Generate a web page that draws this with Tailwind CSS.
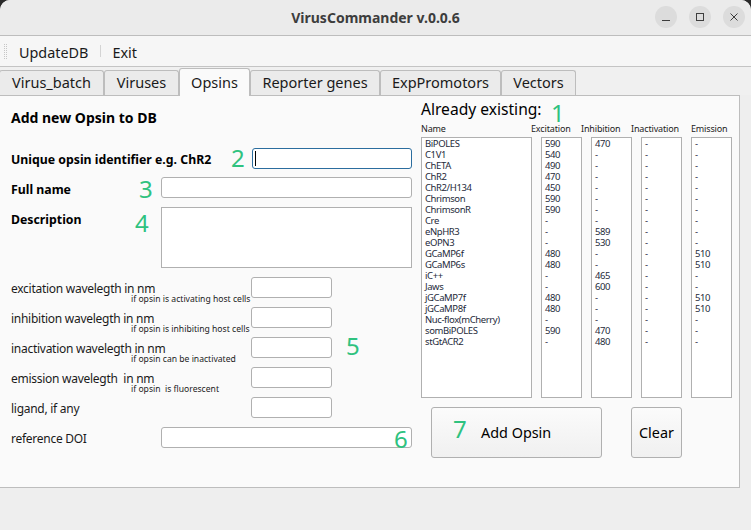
<!DOCTYPE html>
<html lang="en">
  <head>
    <meta charset="UTF-8" />
    <title>VirusCommander v.0.0.6</title>
    <script src="https://cdn.jsdelivr.net/npm/@tailwindcss/browser@4"></script>
  </head>
  <body class="bg-[#2a2a2a]">
    <div class="w-[751px] h-[530px] relative overflow-hidden rounded-t-[10px] bg-[#eeeeee] font-['Noto_Sans',sans-serif] text-[#1a1a1a]">
      <!-- title bar -->
      <div class="h-[36px] bg-[#ebebeb] border-b border-[#bdbdbd] relative flex items-center justify-center">
        <span class="text-[14px] font-bold text-[#3d3d3d]">VirusCommander v.0.0.6</span>
        <div class="absolute right-[6px] top-[6px] flex gap-[12px]">
          <div class="w-[22px] h-[22px] rounded-full bg-[#dcdcdc] flex items-center justify-center">
            <svg width="10" height="10" viewBox="0 0 10 10"><path d="M1 8.5H9" stroke="#3d3d3d" stroke-width="1"/></svg>
          </div>
          <div class="w-[22px] h-[22px] rounded-full bg-[#dcdcdc] flex items-center justify-center">
            <svg width="10" height="10" viewBox="0 0 10 10"><rect x="1.5" y="1.5" width="7" height="7" fill="none" stroke="#3d3d3d"/></svg>
          </div>
          <div class="w-[22px] h-[22px] rounded-full bg-[#dcdcdc] flex items-center justify-center">
            <svg width="10" height="10" viewBox="0 0 10 10"><path d="M1.5 1.5L8.5 8.5M8.5 1.5L1.5 8.5" stroke="#3d3d3d" stroke-width="1"/></svg>
          </div>
        </div>
      </div>

      <!-- toolbar -->
      <div class="h-[31px] bg-[#f6f6f6] border-b border-[#c4c4c4] flex items-center text-[14.4px]">
        <svg class="ml-[4px]" width="4" height="15" viewBox="0 0 4 15" fill="#c6c6c6">
          <path d="M0 0h1v1H0zM2 0h1v1H2zM0 2h1v1H0zM2 2h1v1H2zM0 4h1v1H0zM2 4h1v1H2zM0 6h1v1H0zM2 6h1v1H2zM0 8h1v1H0zM2 8h1v1H2zM0 10h1v1H0zM2 10h1v1H2zM0 12h1v1H0zM2 12h1v1H2zM0 14h1v1H0zM2 14h1v1H2z"/>
        </svg>
        <span class="ml-[11px] mt-[3px]">UpdateDB</span>
        <div class="ml-[12px] w-px h-[12px] bg-[#d4d4d4]"></div>
        <span class="ml-[11px] mt-[3px]">Exit</span>
      </div>

      <!-- tabs -->
      <div class="h-[28px] flex items-end bg-[#f0f0f0] text-[14.5px] relative z-10">
        <div class="w-[105px] h-[25px] -ml-px bg-[#ebebeb] border border-b-0 border-[#bdbdbd] rounded-t-[3px] flex items-center justify-center">Virus_batch</div>
        <div class="w-[75px] h-[25px] bg-[#ebebeb] border border-b-0 border-[#bdbdbd] rounded-t-[3px] flex items-center justify-center">Viruses</div>
        <div class="w-[71px] h-[28px] -mb-px bg-[#fafafa] border border-b-0 border-[#bdbdbd] rounded-t-[3px] flex items-center justify-center">Opsins</div>
        <div class="w-[130px] h-[25px] bg-[#ebebeb] border border-b-0 border-[#bdbdbd] rounded-t-[3px] flex items-center justify-center">Reporter genes</div>
        <div class="w-[121px] h-[25px] bg-[#ebebeb] border border-b-0 border-[#bdbdbd] rounded-t-[3px] flex items-center justify-center">ExpPromotors</div>
        <div class="w-[75px] h-[25px] bg-[#ebebeb] border border-b-0 border-[#bdbdbd] rounded-t-[3px] flex items-center justify-center">Vectors</div>
      </div>

      <!-- pane -->
      <div class="w-[740px] h-[393px] bg-[#fafafa] border-t border-r border-b border-[#bdbdbd] flex">
        <!-- left form -->
        <div class="w-[421px] pl-[11px] text-[12px] tracking-[-0.27px]">
          <h2 class="h-[52px] pt-[12px] text-[14px] tracking-normal leading-[20px] font-bold text-black">Add new Opsin to DB</h2>
          <div class="h-[29px] flex items-start justify-between pr-[9px]">
            <span class="font-bold text-[12.3px] tracking-normal leading-[24px] text-black">Unique opsin identifier e.g. ChR2</span>
            <div class="w-[160px] h-[21px] bg-white border border-[#2b6d9e] rounded-[3px] flex items-center pl-[2px]"><div class="w-px h-[15px] bg-black"></div></div>
          </div>
          <div class="h-[30px] flex items-start justify-between pr-[9px]">
            <span class="font-bold text-[12.3px] tracking-normal leading-[26px] text-black">Full name</span>
            <div class="w-[251px] h-[21px] bg-white border border-[#b0b0b0] rounded-[3px]"></div>
          </div>
          <div class="h-[70px] flex items-start justify-between pr-[9px]">
            <span class="font-bold text-[12.3px] tracking-normal leading-[26px] text-black">Description</span>
            <div class="w-[251px] h-[61px] bg-white border border-[#b0b0b0]"></div>
          </div>
          <div class="h-[30px] flex items-start relative">
            <span class="leading-[24px]">excitation wavelegth in nm</span>
            <span class="absolute left-[120px] top-[16px] text-[8.6px] tracking-normal leading-[12px] whitespace-nowrap">if opsin is activating host cells</span>
            <div class="absolute left-[240px] top-0 w-[81px] h-[21px] bg-white border border-[#b0b0b0] rounded-[3px]"></div>
          </div>
          <div class="h-[30px] flex items-start relative">
            <span class="leading-[24px]">inhibition wavelegth in nm</span>
            <span class="absolute left-[120px] top-[16px] text-[8.6px] tracking-normal leading-[12px] whitespace-nowrap">if opsin is inhibiting host cells</span>
            <div class="absolute left-[240px] top-0 w-[81px] h-[21px] bg-white border border-[#b0b0b0] rounded-[3px]"></div>
          </div>
          <div class="h-[30px] flex items-start relative">
            <span class="leading-[24px]">inactivation wavelegth in nm</span>
            <span class="absolute left-[120px] top-[16px] text-[8.6px] tracking-normal leading-[12px] whitespace-nowrap">if opsin can be inactivated</span>
            <div class="absolute left-[240px] top-0 w-[81px] h-[21px] bg-white border border-[#b0b0b0] rounded-[3px]"></div>
          </div>
          <div class="h-[30px] flex items-start relative">
            <span class="leading-[24px] whitespace-pre">emission wavelegth  in nm</span>
            <span class="absolute left-[120px] top-[16px] text-[8.6px] tracking-normal leading-[12px] whitespace-pre">if opsin  is fluorescent</span>
            <div class="absolute left-[240px] top-0 w-[81px] h-[21px] bg-white border border-[#b0b0b0] rounded-[3px]"></div>
          </div>
          <div class="h-[30px] flex items-start relative">
            <span class="leading-[24px]">ligand, if any</span>
            <div class="absolute left-[240px] top-0 w-[81px] h-[21px] bg-white border border-[#b0b0b0] rounded-[3px]"></div>
          </div>
          <div class="h-[21px] flex items-start justify-between pr-[9px]">
            <span class="leading-[24px]">reference DOI</span>
            <div class="w-[251px] h-[21px] bg-white border border-[#b0b0b0] rounded-[3px]"></div>
          </div>
        </div>

        <!-- right lists -->
        <div class="flex-1 text-[9.5px] tracking-[-0.4px]">
          <div class="h-[24px] pt-[1px] text-[15.6px] tracking-normal leading-[24px] text-black">Already existing:</div>
          <div class="h-[17px] flex items-center leading-[12px] text-[9px] tracking-[-0.15px] text-[#222]">
            <span class="w-[110px]">Name</span>
            <span class="w-[50px]">Excitation</span>
            <span class="w-[50px]">Inhibition</span>
            <span class="w-[60px]">Inactivation</span>
            <span>Emission</span>
          </div>
          <div class="flex gap-[9px] leading-[11px] text-[#1e2a3a]">
            <div class="w-[111px] h-[261px] bg-white border border-[#b0b0b0] pl-[3px] whitespace-pre-line">BiPOLES
C1V1
ChETA
ChR2
ChR2/H134
Chrimson
ChrimsonR
Cre
eNpHR3
eOPN3
GCaMP6f
GCaMP6s
iC++
Jaws
jGCaMP7f
jGCaMP8f
Nuc-flox(mCherry)
somBiPOLES
stGtACR2</div>
            <div class="w-[41px] h-[261px] bg-white border border-[#b0b0b0] pl-[3px] whitespace-pre-line">590
540
490
470
450
590
590
-
-
-
480
480
-
-
480
480
-
590
-</div>
            <div class="w-[41px] h-[261px] bg-white border border-[#b0b0b0] pl-[3px] whitespace-pre-line">470
-
-
-
-
-
-
-
589
530
-
-
465
600
-
-
-
470
480</div>
            <div class="w-[41px] h-[261px] bg-white border border-[#b0b0b0] pl-[3px] whitespace-pre-line">-
-
-
-
-
-
-
-
-
-
-
-
-
-
-
-
-
-
-</div>
            <div class="w-[41px] h-[261px] bg-white border border-[#b0b0b0] pl-[3px] whitespace-pre-line">-
-
-
-
-
-
-
-
-
-
510
510
-
-
510
510
-
-
-</div>
          </div>
          <div class="mt-[9px] ml-[10px] flex gap-[29px] text-[14.4px] tracking-normal text-black">
            <div class="w-[171px] h-[51px] rounded-[3px] border border-[#b0b0b0] bg-gradient-to-b from-[#fbfbfb] to-[#f0f0f0] flex items-center pl-[49px]">Add Opsin</div>
            <div class="w-[51px] h-[51px] rounded-[3px] border border-[#b0b0b0] bg-gradient-to-b from-[#fbfbfb] to-[#f0f0f0] flex items-center justify-center">Clear</div>
          </div>
        </div>
      </div>

      <!-- green callout numbers drawn over the screenshot -->
      <span class="absolute left-[551px] top-[97px] text-[24px] leading-[32px] text-[#2fc27f]">1</span>
      <span class="absolute left-[231px] top-[142px] text-[24px] leading-[32px] text-[#2fc27f]">2</span>
      <span class="absolute left-[139px] top-[173px] text-[24px] leading-[32px] text-[#2fc27f]">3</span>
      <span class="absolute left-[135px] top-[207px] text-[24px] leading-[32px] text-[#2fc27f]">4</span>
      <span class="absolute left-[346px] top-[330px] text-[24px] leading-[32px] text-[#2fc27f]">5</span>
      <span class="absolute left-[394px] top-[423px] text-[24px] leading-[32px] text-[#2fc27f]">6</span>
      <span class="absolute left-[453px] top-[413px] text-[24px] leading-[32px] text-[#2fc27f]">7</span>
    </div>
  </body>
</html>
